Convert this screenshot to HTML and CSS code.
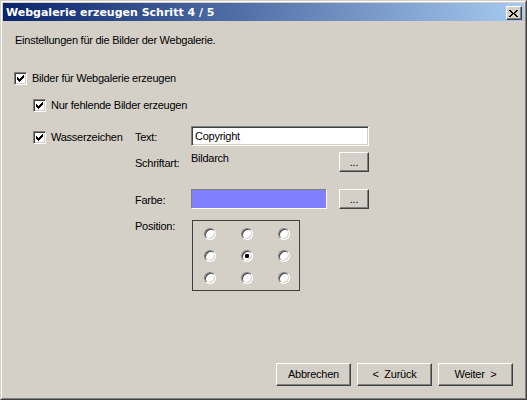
FILE: index.html
```html
<!DOCTYPE html>
<html lang="de">
<head>
<meta charset="utf-8">
<title>Webgalerie erzeugen</title>
<link rel="stylesheet" href="styles.css">
</head>
<body>
<div class="window">
  <div class="frame">
    <div class="titlebar">
      <span class="title">Webgalerie erzeugen Schritt 4 / 5</span>
      <button class="close" type="button" aria-label="Schließen">
        <svg class="xglyph" width="9" height="7" viewBox="0 0 9 7" shape-rendering="crispEdges"><path fill="#000" d="M0 0h2v1H0z M7 0h2v1H7z M1 1h2v1H1z M6 1h2v1H6z M2 2h2v1H2z M5 2h2v1H5z M3 3h3v1H3z M2 4h2v1H2z M5 4h2v1H5z M1 5h2v1H1z M6 5h2v1H6z M0 6h2v1H0z M7 6h2v1H7z"/></svg>
      </button>
    </div>
    <div class="content">
      <p class="intro">Einstellungen für die Bilder der Webgalerie.</p>

      <div class="check row-main">
        <span class="box"><svg width="11" height="11" viewBox="0 0 11 11" shape-rendering="crispEdges"><path fill="#000" d="M2 4h1v3H2z M3 5h1v3H3z M4 6h1v3H4z M5 5h1v3H5z M6 4h1v3H6z M7 3h1v3H7z M8 2h1v3H8z"/></svg></span>
        <span class="ctext">Bilder für Webgalerie erzeugen</span>
      </div>

      <div class="sub">
        <div class="check row-missing">
          <span class="box"><svg width="11" height="11" viewBox="0 0 11 11" shape-rendering="crispEdges"><path fill="#000" d="M2 4h1v3H2z M3 5h1v3H3z M4 6h1v3H4z M5 5h1v3H5z M6 4h1v3H6z M7 3h1v3H7z M8 2h1v3H8z"/></svg></span>
          <span class="ctext">Nur fehlende Bilder erzeugen</span>
        </div>

        <div class="wm">
          <div class="wm-left">
            <div class="check">
              <span class="box"><svg width="11" height="11" viewBox="0 0 11 11" shape-rendering="crispEdges"><path fill="#000" d="M2 4h1v3H2z M3 5h1v3H3z M4 6h1v3H4z M5 5h1v3H5z M6 4h1v3H6z M7 3h1v3H7z M8 2h1v3H8z"/></svg></span>
              <span class="ctext">Wasserzeichen</span>
            </div>
          </div>
          <div class="wm-fields">
            <div class="frow r-text">
              <span class="lbl">Text:</span>
              <div class="input">Copyright</div>
            </div>
            <div class="frow r-font">
              <span class="lbl">Schriftart:</span>
              <div class="field">
                <span class="value">Bildarch</span>
                <button class="btn small" type="button">...</button>
              </div>
            </div>
            <div class="frow r-color">
              <span class="lbl">Farbe:</span>
              <div class="field">
                <div class="swatch"></div>
                <button class="btn small" type="button">...</button>
              </div>
            </div>
            <div class="frow r-pos">
              <span class="lbl lbl-top">Position:</span>
              <div class="posframe">
                <span class="radio"></span><span class="radio"></span><span class="radio"></span>
                <span class="radio"></span><span class="radio on"></span><span class="radio"></span>
                <span class="radio"></span><span class="radio"></span><span class="radio"></span>
              </div>
            </div>
          </div>
        </div>
      </div>

      <div class="actions">
        <button class="btn big" type="button">Abbrechen</button>
        <button class="btn big" type="button">&lt;&nbsp; Zurück</button>
        <button class="btn big" type="button">Weiter &nbsp;&gt;</button>
      </div>
    </div>
  </div>
</div>
</body>
</html>
```

FILE: styles.css
```css
html, body {
  margin: 0;
  padding: 0;
  background: #d4d0c8;
}

body {
  font-family: "Liberation Sans", Arial, sans-serif;
  font-size: 11px;
  line-height: 13px;
  letter-spacing: -0.25px;
  color: #000;
}

.window {
  width: 527px;
  height: 400px;
  box-sizing: border-box;
  border: 1px solid;
  border-color: #d4d0c8 #404040 #404040 #d4d0c8;
  background: #d4d0c8;
}

.frame {
  height: 100%;
  box-sizing: border-box;
  border: 1px solid;
  border-color: #ffffff #808080 #808080 #ffffff;
  padding: 1px;
  display: flex;
  flex-direction: column;
}

.titlebar {
  height: 18px;
  flex: none;
  display: flex;
  align-items: flex-start;
  padding-left: 3px;
  background: linear-gradient(to right, #0a246a, #a6caf0);
}

.title {
  color: #fff;
  font-family: "DejaVu Sans", Verdana, sans-serif;
  font-weight: bold;
  font-size: 11px;
  letter-spacing: 0;
  margin-top: 3px;
  white-space: nowrap;
}

.close {
  margin: 3px 2px 0 auto;
  width: 16px;
  height: 14px;
  box-sizing: border-box;
  padding: 1px 0 0 2px;
  background: #d4d0c8;
  border: 1px solid;
  border-color: #ffffff #404040 #404040 #ffffff;
  box-shadow: inset -1px -1px #808080;
  display: block;
}

.xglyph {
  display: block;
}

.content {
  flex: 1;
  display: flex;
  flex-direction: column;
  padding: 13px 11px 11px 11px;
}

.intro {
  margin: 0;
  padding-left: 1px;
}

.check {
  display: flex;
  align-items: center;
}

.box {
  width: 13px;
  height: 13px;
  box-sizing: border-box;
  flex: none;
  border: 1px solid;
  border-color: #808080 #ffffff #ffffff #808080;
  box-shadow: inset 1px 1px #404040, inset -1px -1px #d4d0c8;
  background: #fff;
}

.box svg {
  display: block;
}

.ctext {
  margin-left: 5px;
  white-space: nowrap;
}

.row-main {
  margin-top: 25px;
}

.sub {
  margin-left: 19px;
}

.row-missing {
  margin-top: 14px;
}

.wm {
  margin-top: 14px;
  display: flex;
}

.wm-left {
  width: 102px;
  flex: none;
  padding-top: 5px;
}

.wm-fields {
  display: flex;
  flex-direction: column;
}

.frow {
  display: flex;
  align-items: flex-start;
}

.lbl {
  width: 56px;
  flex: none;
  padding-top: 5px;
  white-space: nowrap;
}

.lbl.lbl-top {
  padding-top: 0;
}

.r-font {
  margin-top: 6px;
}

.r-color {
  margin-top: 17px;
}

.r-pos {
  margin-top: 11px;
}

.input {
  width: 178px;
  height: 20px;
  box-sizing: border-box;
  border: 1px solid;
  border-color: #808080 #ffffff #ffffff #808080;
  box-shadow: inset 1px 1px #404040, inset -1px -1px #d4d0c8;
  background: #fff;
  padding: 3px 0 0 3px;
  white-space: nowrap;
}

.field {
  width: 178px;
  display: flex;
  align-items: flex-start;
}

.value {
  flex: 1;
}

.swatch {
  width: 136px;
  height: 20px;
  box-sizing: border-box;
  border: 1px solid;
  border-color: #808080 #ffffff #ffffff #808080;
  background: #8080ff;
}

.btn {
  box-sizing: border-box;
  background: #d4d0c8;
  border: 1px solid;
  border-color: #ffffff #404040 #404040 #ffffff;
  box-shadow: inset -1px -1px #808080;
  font-family: inherit;
  font-size: 11px;
  line-height: 13px;
  letter-spacing: -0.25px;
  color: #000;
  padding: 0;
  margin: 0;
  text-align: center;
  white-space: nowrap;
}

.btn.small {
  width: 30px;
  height: 20px;
  margin-left: auto;
}

.btn.big {
  width: 75px;
  height: 23px;
}

.posframe {
  margin-left: 1px;
  width: 108px;
  height: 71px;
  box-sizing: border-box;
  border: 1px solid #404040;
  padding: 7px 0 0 11px;
  display: grid;
  grid-template-columns: repeat(3, 12px);
  grid-auto-rows: 12px;
  column-gap: 25px;
  row-gap: 10px;
  align-content: start;
}

.radio {
  width: 12px;
  height: 12px;
  box-sizing: border-box;
  border-radius: 50%;
  border: 1px solid;
  border-color: #808080 #ffffff #ffffff #808080;
  box-shadow: inset 1px 1px #404040, inset -1px -1px #d4d0c8;
  background: #fff;
  display: flex;
  align-items: center;
  justify-content: center;
}

.radio.on::after {
  content: "";
  width: 4px;
  height: 4px;
  border-radius: 1px;
  background: #000;
}

.actions {
  margin-top: auto;
  display: flex;
  justify-content: flex-end;
  gap: 6px;
}
```
